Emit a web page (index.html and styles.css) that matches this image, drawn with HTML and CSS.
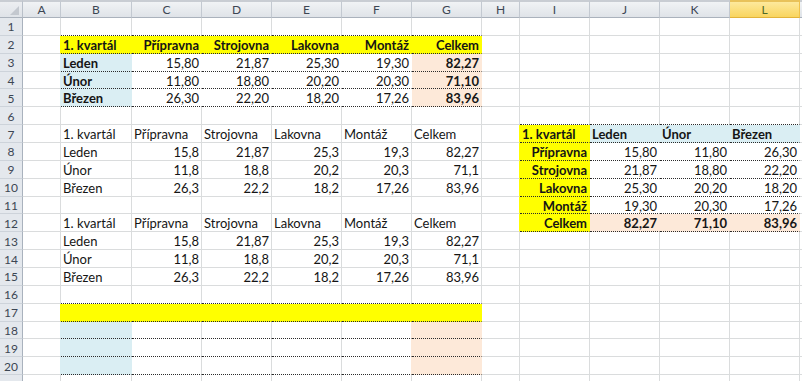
FILE: index.html
```
<!DOCTYPE html>
<html lang="cs">
<head>
<meta charset="utf-8">
<title>Sešit</title>
<link rel="stylesheet" href="styles.css">
</head>
<body>
<div class="sheet">
  <div class="row hdr">
    <div class="corner"><span class="tri"></span></div>
    <div class="ch">A</div><div class="ch">B</div><div class="ch">C</div><div class="ch">D</div><div class="ch">E</div><div class="ch">F</div><div class="ch">G</div><div class="ch">H</div><div class="ch">I</div><div class="ch">J</div><div class="ch">K</div><div class="ch sel">L</div><div class="ch last"></div>
  </div>

  <div class="row">
    <div class="rh">1</div><div class="c"></div>
    <div class="c d"></div><div class="c d"></div><div class="c d"></div><div class="c d"></div><div class="c d"></div><div class="c d"></div>
    <div class="c"></div><div class="c"></div><div class="c"></div><div class="c"></div><div class="c"></div><div class="c"></div>
  </div>

  <div class="row">
    <div class="rh">2</div><div class="c ry"></div>
    <div class="c d y b">1. kvartál</div><div class="c d y b n">Přípravna</div><div class="c d y b n">Strojovna</div><div class="c d y b n">Lakovna</div><div class="c d y b n">Montáž</div><div class="c d y b n">Celkem</div>
    <div class="c"></div><div class="c"></div><div class="c"></div><div class="c"></div><div class="c"></div><div class="c"></div>
  </div>

  <div class="row">
    <div class="rh">3</div><div class="c rb"></div>
    <div class="c d bl b">Leden</div><div class="c d w n">15,80</div><div class="c d w n">21,87</div><div class="c d w n">25,30</div><div class="c d w n">19,30</div><div class="c d pe b n">82,27</div>
    <div class="c"></div><div class="c"></div><div class="c"></div><div class="c"></div><div class="c"></div><div class="c"></div>
  </div>

  <div class="row">
    <div class="rh">4</div><div class="c rb"></div>
    <div class="c d bl b">Únor</div><div class="c d w n">11,80</div><div class="c d w n">18,80</div><div class="c d w n">20,20</div><div class="c d w n">20,30</div><div class="c d pe b n">71,10</div>
    <div class="c"></div><div class="c"></div><div class="c"></div><div class="c"></div><div class="c"></div><div class="c"></div>
  </div>

  <div class="row">
    <div class="rh">5</div><div class="c rb"></div>
    <div class="c d bl b">Březen</div><div class="c d w n">26,30</div><div class="c d w n">22,20</div><div class="c d w n">18,20</div><div class="c d w n">17,26</div><div class="c d pe b n">83,96</div>
    <div class="c"></div><div class="c"></div><div class="c"></div><div class="c"></div><div class="c"></div><div class="c"></div>
  </div>

  <div class="row">
    <div class="rh">6</div><div class="c"></div>
    <div class="c"></div><div class="c"></div><div class="c"></div><div class="c"></div><div class="c"></div><div class="c"></div>
    <div class="c"></div><div class="c d"></div><div class="c d"></div><div class="c d"></div><div class="c d"></div><div class="c"></div>
  </div>

  <div class="row">
    <div class="rh">7</div><div class="c"></div>
    <div class="c">1. kvartál</div><div class="c">Přípravna</div><div class="c">Strojovna</div><div class="c">Lakovna</div><div class="c">Montáž</div><div class="c">Celkem</div>
    <div class="c ry"></div><div class="c d y b">1. kvartál</div><div class="c d bl b">Leden</div><div class="c d bl b">Únor</div><div class="c d bl b">Březen</div><div class="c"></div>
  </div>

  <div class="row">
    <div class="rh">8</div><div class="c"></div>
    <div class="c">Leden</div><div class="c n">15,8</div><div class="c n">21,87</div><div class="c n">25,3</div><div class="c n">19,3</div><div class="c n">82,27</div>
    <div class="c ry"></div><div class="c d y b n">Přípravna</div><div class="c d w n">15,80</div><div class="c d w n">11,80</div><div class="c d w n">26,30</div><div class="c"></div>
  </div>

  <div class="row">
    <div class="rh">9</div><div class="c"></div>
    <div class="c">Únor</div><div class="c n">11,8</div><div class="c n">18,8</div><div class="c n">20,2</div><div class="c n">20,3</div><div class="c n">71,1</div>
    <div class="c ry"></div><div class="c d y b n">Strojovna</div><div class="c d w n">21,87</div><div class="c d w n">18,80</div><div class="c d w n">22,20</div><div class="c"></div>
  </div>

  <div class="row">
    <div class="rh">10</div><div class="c"></div>
    <div class="c">Březen</div><div class="c n">26,3</div><div class="c n">22,2</div><div class="c n">18,2</div><div class="c n">17,26</div><div class="c n">83,96</div>
    <div class="c ry"></div><div class="c d y b n">Lakovna</div><div class="c d w n">25,30</div><div class="c d w n">20,20</div><div class="c d w n">18,20</div><div class="c"></div>
  </div>

  <div class="row">
    <div class="rh">11</div><div class="c"></div>
    <div class="c"></div><div class="c"></div><div class="c"></div><div class="c"></div><div class="c"></div><div class="c"></div>
    <div class="c ry"></div><div class="c d y b n">Montáž</div><div class="c d w n">19,30</div><div class="c d w n">20,30</div><div class="c d w n">17,26</div><div class="c"></div>
  </div>

  <div class="row">
    <div class="rh">12</div><div class="c"></div>
    <div class="c">1. kvartál</div><div class="c">Přípravna</div><div class="c">Strojovna</div><div class="c">Lakovna</div><div class="c">Montáž</div><div class="c">Celkem</div>
    <div class="c ry"></div><div class="c d y b n">Celkem</div><div class="c d pe b n">82,27</div><div class="c d pe b n">71,10</div><div class="c d pe b n">83,96</div><div class="c"></div>
  </div>

  <div class="row">
    <div class="rh">13</div><div class="c"></div>
    <div class="c">Leden</div><div class="c n">15,8</div><div class="c n">21,87</div><div class="c n">25,3</div><div class="c n">19,3</div><div class="c n">82,27</div>
    <div class="c"></div><div class="c"></div><div class="c"></div><div class="c"></div><div class="c"></div><div class="c"></div>
  </div>

  <div class="row">
    <div class="rh">14</div><div class="c"></div>
    <div class="c">Únor</div><div class="c n">11,8</div><div class="c n">18,8</div><div class="c n">20,2</div><div class="c n">20,3</div><div class="c n">71,1</div>
    <div class="c"></div><div class="c"></div><div class="c"></div><div class="c"></div><div class="c"></div><div class="c"></div>
  </div>

  <div class="row">
    <div class="rh">15</div><div class="c"></div>
    <div class="c">Březen</div><div class="c n">26,3</div><div class="c n">22,2</div><div class="c n">18,2</div><div class="c n">17,26</div><div class="c n">83,96</div>
    <div class="c"></div><div class="c"></div><div class="c"></div><div class="c"></div><div class="c"></div><div class="c"></div>
  </div>

  <div class="row">
    <div class="rh">16</div><div class="c"></div>
    <div class="c d"></div><div class="c d"></div><div class="c d"></div><div class="c d"></div><div class="c d"></div><div class="c d"></div>
    <div class="c"></div><div class="c"></div><div class="c"></div><div class="c"></div><div class="c"></div><div class="c"></div>
  </div>

  <div class="row">
    <div class="rh">17</div><div class="c ry"></div>
    <div class="c d y"></div><div class="c d y"></div><div class="c d y"></div><div class="c d y"></div><div class="c d y"></div><div class="c d y"></div>
    <div class="c"></div><div class="c"></div><div class="c"></div><div class="c"></div><div class="c"></div><div class="c"></div>
  </div>

  <div class="row">
    <div class="rh">18</div><div class="c rb"></div>
    <div class="c d bl"></div><div class="c d"></div><div class="c d"></div><div class="c d"></div><div class="c d rp"></div><div class="c d pe"></div>
    <div class="c"></div><div class="c"></div><div class="c"></div><div class="c"></div><div class="c"></div><div class="c"></div>
  </div>

  <div class="row">
    <div class="rh">19</div><div class="c rb"></div>
    <div class="c d bl"></div><div class="c d"></div><div class="c d"></div><div class="c d"></div><div class="c d rp"></div><div class="c d pe"></div>
    <div class="c"></div><div class="c"></div><div class="c"></div><div class="c"></div><div class="c"></div><div class="c"></div>
  </div>

  <div class="row">
    <div class="rh">20</div><div class="c rb"></div>
    <div class="c d bl"></div><div class="c d"></div><div class="c d"></div><div class="c d"></div><div class="c d rp"></div><div class="c d pe"></div>
    <div class="c"></div><div class="c"></div><div class="c"></div><div class="c"></div><div class="c"></div><div class="c"></div>
  </div>

  <div class="row">
    <div class="rh"></div><div class="c"></div>
    <div class="c"></div><div class="c"></div><div class="c"></div><div class="c"></div><div class="c"></div><div class="c"></div>
    <div class="c"></div><div class="c"></div><div class="c"></div><div class="c"></div><div class="c"></div><div class="c"></div>
  </div>
</div>
</body>
</html>
```
FILE: styles.css
```
* { box-sizing: border-box; }
html, body { margin: 0; padding: 0; background: #fff; overflow: hidden; }
body { font-family: Lato, "Liberation Sans", sans-serif; color: #151515; }

.sheet { display: flex; flex-direction: column; width: 802px; height: 381px; overflow: hidden; }

.row {
  display: grid;
  grid-template-columns: 23px 38px 71px 70px 70px 70px 70px 70px 38px 70px 70px 70px 70px 1fr;
  height: 17.87px;
  flex: none;
}
.row.hdr { height: 18px; }

.c {
  border-right: 1px solid #dadcdd;
  border-bottom: 1px solid #dadcdd;
  font-size: 13px;
  line-height: 16px;
  padding: 1px 2px 0 2px;
  white-space: nowrap;
  overflow: hidden;
  display: flex;
  align-items: center;
}
.n { justify-content: flex-end; }
.b { font-weight: 700; }
.y { background: #ffff00; border-right-color: #ffff00; }
.bl { background: #daeef3; border-right-color: #daeef3; }
.pe { background: #fde9d9; border-right-color: #fde9d9; }
.w { background: #fff; border-right-color: #fff; }
.d { border-bottom: 1px dotted #2b2b2b; }
.ry { border-right-color: #ffff00; }
.rb { border-right-color: #daeef3; }
.rp { border-right-color: #fde9d9; }

.corner {
  position: relative;
  background: linear-gradient(#eceef1, #dfe3e8);
  border-top: 2px solid #c9cdd3;
  border-right: 1px solid #b9c0c9;
  border-bottom: 1px solid #aab2bc;
}
.tri {
  position: absolute;
  right: 3px;
  bottom: 2px;
  width: 0;
  height: 0;
  border-left: 9px solid transparent;
  border-bottom: 9px solid #c3c8cf;
}
.ch {
  background: linear-gradient(#f1f3f5, #dfe3e8);
  border-top: 2px solid #c9cdd3;
  border-right: 1px solid #c3c9d1;
  border-bottom: 1px solid #aab2bc;
  display: flex;
  align-items: center;
  justify-content: center;
  font-size: 12px;
  color: #3c4653;
}
.ch.sel {
  background: linear-gradient(#fde99c, #f9d55f);
  border-right-color: #f0c24a;
  border-bottom-color: #e2b33a;
  border-top-color: #e8c25a;
  color: #4f6a27;
}
.ch.last { border-right: none; }
.rh {
  background: #e4e8ed;
  border-right: 1px solid #a9b2bd;
  border-bottom: 1px solid #cdd3da;
  display: flex;
  align-items: center;
  justify-content: center;
  font-size: 12px;
  color: #3c4653;
  padding-top: 1px;
}
```
